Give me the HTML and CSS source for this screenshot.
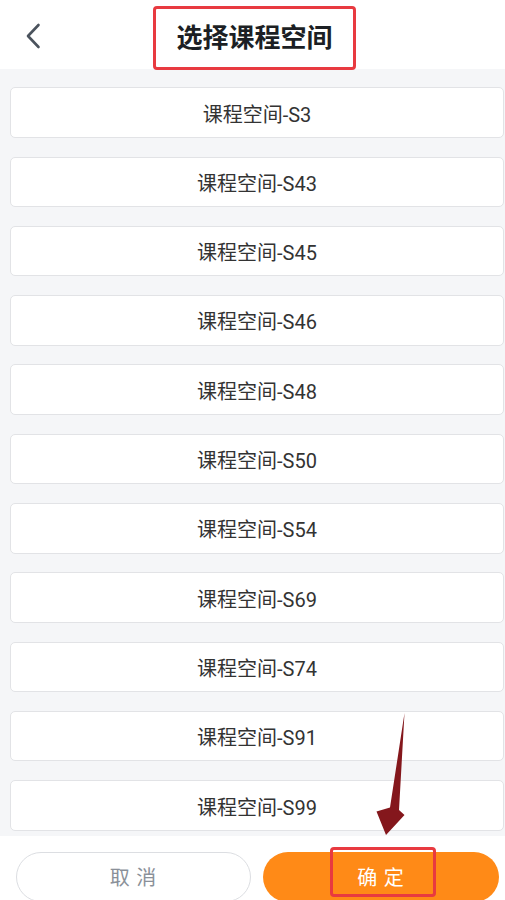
FILE: index.html
```html
<!DOCTYPE html>
<html lang="zh-CN">
<head>
<meta charset="utf-8">
<title>选择课程空间</title>
<link rel="stylesheet" href="styles.css">
</head>
<body>
<div class="page">
  <header class="header">
    <div class="back">
      <svg width="16" height="26" viewBox="0 0 16 26"><path d="M13.5 2 L3 13 L13.5 24" fill="none" stroke="#4b535d" stroke-width="2.6" stroke-linecap="round" stroke-linejoin="round"/></svg>
    </div>
    <h1 class="title">选择课程空间</h1>
    <div></div>
  </header>
  <main class="list">
    <div class="item">课程空间-S3</div>
    <div class="item">课程空间-S43</div>
    <div class="item">课程空间-S45</div>
    <div class="item">课程空间-S46</div>
    <div class="item">课程空间-S48</div>
    <div class="item">课程空间-S50</div>
    <div class="item">课程空间-S54</div>
    <div class="item">课程空间-S69</div>
    <div class="item">课程空间-S74</div>
    <div class="item">课程空间-S91</div>
    <div class="item">课程空间-S99</div>
  </main>
  <footer class="footer">
    <button class="btn btn-cancel">取 消</button>
    <button class="btn btn-ok">确 定</button>
  </footer>
  <div class="mark mark-title"></div>
  <div class="mark mark-ok"></div>
  <svg class="arrow" width="505" height="900" viewBox="0 0 505 900">
    <polygon points="404.5,713 399,810 404.5,815 386,835 376.5,811.5 390,807.5" fill="#84171c"/>
  </svg>
</div>
</body>
</html>
```
FILE: styles.css
```css
* { box-sizing: border-box; }
html, body { margin: 0; padding: 0; }
body {
  font-family: Roboto, "Noto Sans CJK SC", sans-serif;
  background: #fff;
}
.page {
  position: relative;
  width: 505px;
  height: 900px;
  display: flex;
  flex-direction: column;
  overflow: hidden;
}
.header {
  height: 69px;
  flex: none;
  background: #fff;
  display: grid;
  grid-template-columns: 1fr auto 1fr;
  align-items: center;
}
.back {
  padding-left: 25px;
  padding-top: 3px;
  display: flex;
  align-items: center;
}
.title {
  margin: 0;
  font-family: "Noto Sans CJK SC", sans-serif;
  font-size: 26px;
  font-weight: 700;
  color: #1c1f24;
  line-height: 30px;
  padding-left: 4px;
  padding-top: 2px;
}
.list {
  flex: 1;
  background: #f5f6f8;
  padding: 18.3px 1px 0 10px;
  overflow: hidden;
}
.item {
  height: 50.5px;
  margin-bottom: 18.8px;
  background: #fff;
  border: 1px solid #e2e3e6;
  border-radius: 5px;
  display: flex;
  align-items: center;
  justify-content: center;
  font-size: 20px;
  color: #333;
  padding-top: 1px;
}
.footer {
  height: 64.3px;
  flex: none;
  background: #fff;
  display: flex;
  gap: 12px;
  padding: 16px 6px 0 16px;
  overflow: hidden;
}
.btn {
  height: 50px;
  flex: none;
  border-radius: 25px;
  font-family: "Noto Sans CJK SC", sans-serif;
  font-size: 20px;
  letter-spacing: 1px;
  display: flex;
  align-items: center;
  justify-content: center;
  padding: 0;
}
.btn-cancel {
  width: 235px;
  background: #fff;
  border: 1px solid #dcdee2;
  color: #8a9099;
}
.btn-ok {
  width: 236px;
  background: #ff8a17;
  border: none;
  color: #fff;
}
.mark {
  position: absolute;
  border: 3px solid #e83a40;
  border-radius: 4px;
}
.mark-title {
  left: 153px;
  top: 6px;
  width: 203px;
  height: 64px;
}
.mark-ok {
  left: 329.5px;
  top: 847px;
  width: 106px;
  height: 50px;
}
.arrow {
  position: absolute;
  left: 0;
  top: 0;
  pointer-events: none;
}
```
